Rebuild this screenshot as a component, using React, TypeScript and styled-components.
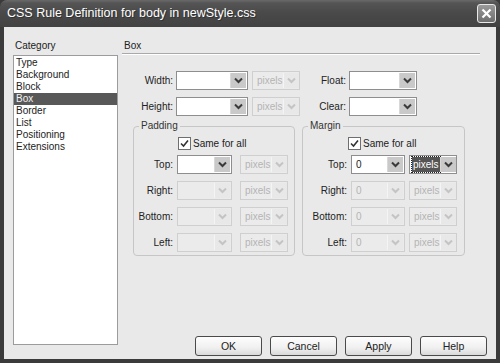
import React from 'react'
import styled, { createGlobalStyle } from 'styled-components'

const GlobalStyle = createGlobalStyle`
  html, body {
    margin: 0;
    padding: 0;
    background: #3a3a3a;
  }
  body {
    font-family: "Liberation Sans", Arial, sans-serif;
    font-size: 10px;
    color: #222;
  }
`

const Window = styled.div`
  width: 500px;
  height: 363px;
  display: flex;
  flex-direction: column;
  background: #3b3b3b;
  border-radius: 7px 7px 0 0;
  overflow: hidden;
`

const TitleBar = styled.div`
  height: 27px;
  flex: none;
  display: flex;
  align-items: center;
  justify-content: space-between;
  padding: 0 4px 1px 7px;
  box-sizing: border-box;
  background: linear-gradient(to bottom, #6a6a6a 0px, #555 3px, #4a4a4a 12px, #424242 27px);
`

const Title = styled.span`
  font-family: "Liberation Sans", Arial, sans-serif;
  font-size: 12.5px;
  color: #fff;
  text-shadow: 1px 1px 0 #333;
`

const CloseButton = styled.div`
  width: 19px;
  height: 19px;
  box-sizing: border-box;
  border: 1px solid #e8e8e8;
  border-radius: 3px;
  background: linear-gradient(to bottom, #9a9a9a, #6e6e6e);
  display: flex;
  align-items: center;
  justify-content: center;
`

const Body = styled.div`
  flex: 1;
  margin: 0 4px 4px;
  background: #e9e9e9;
  display: flex;
  padding: 12px 9px 2px;
  box-sizing: border-box;
  gap: 4px;
`

const CategoryCol = styled.div`
  width: 105px;
  display: flex;
  flex-direction: column;
`

const SectionLabel = styled.div`
  height: 13px;
  line-height: 13px;
  margin-bottom: 3px;
  padding-left: 2px;
`

const ListBox = styled.div`
  height: 290px;
  box-sizing: border-box;
  border: 1px solid #9c9c9c;
  background: #fff;
  padding-top: 1px;
`

const ListItem = styled.div<{ $selected?: boolean }>`
  height: 12px;
  line-height: 12px;
  padding-left: 2px;
  background: ${({ $selected }) => ($selected ? '#585858' : 'transparent')};
  color: ${({ $selected }) => ($selected ? '#f2f2f2' : '#222')};
`

const RightCol = styled.div`
  flex: 1;
  display: flex;
  flex-direction: column;
`

const Rule = styled.div`
  height: 1px;
  margin-top: -2px;
  margin-right: 7px;
  background: #a9a9a9;
  border-bottom: 1px solid #fff;
`

const TopRows = styled.div`
  margin-top: 16px;
  display: flex;
  flex-direction: column;
  gap: 7px;
`

const Row = styled.div`
  display: flex;
  align-items: center;
  height: 19px;
`

const FieldLabel = styled.div<{ $w: number }>`
  width: ${({ $w }) => $w}px;
  flex: none;
  text-align: right;
  color: #222;
`

const SelectBox = styled.div<{ $w: number; $disabled?: boolean; $ml: number }>`
  width: ${({ $w }) => $w}px;
  height: 19px;
  margin-left: ${({ $ml }) => $ml}px;
  flex: none;
  box-sizing: border-box;
  border: 1px solid ${({ $disabled }) => ($disabled ? '#cfcfcf' : '#8e8e8e')};
  background: ${({ $disabled }) => ($disabled ? '#ebebeb' : '#fff')};
  display: flex;
  align-items: center;
  padding: 1px;
`

const SelectText = styled.div<{ $disabled?: boolean }>`
  flex: 1;
  padding-left: 3px;
  color: ${({ $disabled }) => ($disabled ? '#b4b4b4' : '#222')};
  line-height: 15px;
  height: 15px;
  display: flex;
  align-items: center;
`

const Highlight = styled.span`
  background: #555;
  color: #fff;
  outline: 1px dotted #222;
  padding: 0 1px;
  line-height: 15px;
  margin-left: -2px;
`

const ArrowBtn = styled.div<{ $disabled?: boolean }>`
  width: 15px;
  height: 15px;
  flex: none;
  background: ${({ $disabled }) => ($disabled ? '#e8e8e8' : '#c9c9c9')};
  border-left: 1px solid ${({ $disabled }) => ($disabled ? '#f4f4f4' : '#d8d8d8')};
  display: flex;
  align-items: center;
  justify-content: center;
`

const Groups = styled.div`
  display: flex;
  gap: 7px;
  margin-top: 4px;
  margin-left: 11px;
`

const Group = styled.fieldset<{ $w: number }>`
  width: ${({ $w }) => $w}px;
  box-sizing: border-box;
  margin: 0;
  padding: 0 0 3px;
  border: 1px solid #c6c6c6;
  border-radius: 4px;
  display: flex;
  flex-direction: column;
`

const Legend = styled.legend`
  margin-left: 5px;
  padding: 0 2px;
  line-height: 12px;
  color: #333;
`

const SameRow = styled.label<{ $ml: number }>`
  display: flex;
  align-items: center;
  gap: 2px;
  margin: 5px 0 5px ${({ $ml }) => $ml}px;
  height: 13px;
`

const CheckBox = styled.div`
  width: 13px;
  height: 13px;
  box-sizing: border-box;
  border: 1px solid #6f6f6f;
  background: #fff;
  display: flex;
  align-items: center;
  justify-content: center;
`

const GroupRows = styled.div`
  display: flex;
  flex-direction: column;
  gap: 7px;
`

const ButtonRow = styled.div`
  margin-top: auto;
  display: flex;
  justify-content: flex-end;
  gap: 8px;
  padding-bottom: 1px;
`

const Button = styled.div`
  width: 67px;
  height: 20px;
  box-sizing: border-box;
  border: 1px solid #4a4a4a;
  border-radius: 3px;
  background: linear-gradient(to bottom, #fdfdfd, #f0f0f0 60%, #d9d9d9);
  display: flex;
  align-items: center;
  justify-content: center;
  font-size: 10.5px;
  color: #222;
`

const Chevron = ({ disabled }: { disabled?: boolean }) => (
  <svg width="9" height="7" viewBox="0 0 9 7">
    <path
      d="M1 1.5 L4.5 5 L8 1.5"
      fill="none"
      stroke={disabled ? '#c4c4c4' : '#3a3a3a'}
      strokeWidth="2"
    />
  </svg>
)

type SelectProps = {
  w: number
  ml: number
  value?: string
  disabled?: boolean
  focus?: boolean
}

const Select = ({ w, ml, value, disabled, focus }: SelectProps) => (
  <SelectBox $w={w} $ml={ml} $disabled={disabled}>
    <SelectText $disabled={disabled}>
      {focus ? <Highlight>{value}</Highlight> : value}
    </SelectText>
    <ArrowBtn $disabled={disabled}>
      <Chevron disabled={disabled} />
    </ArrowBtn>
  </SelectBox>
)

const categories = ['Type', 'Background', 'Block', 'Box', 'Border', 'List', 'Positioning', 'Extensions']
const sides = ['Top', 'Right', 'Bottom', 'Left']

type GroupProps = {
  title: string
  width: number
  labelW: number
  selW: number
  unitGap: number
  checkLeft: number
  value?: string
}

const SideGroup = ({ title, width, labelW, selW, unitGap, checkLeft, value }: GroupProps) => (
  <Group $w={width}>
    <Legend>{title}</Legend>
    <SameRow $ml={checkLeft}>
      <CheckBox>
        <svg width="9" height="9" viewBox="0 0 9 9">
          <path d="M1 4.5 L3.5 7 L8 1.5" fill="none" stroke="#333" strokeWidth="1.6" />
        </svg>
      </CheckBox>
      <span>Same for all</span>
    </SameRow>
    <GroupRows>
      {sides.map((s, i) => (
        <Row key={s}>
          <FieldLabel $w={labelW}>{s}:</FieldLabel>
          <Select w={selW} ml={4} value={value} disabled={i > 0} />
          <Select w={48} ml={unitGap} value="pixels" disabled={i > 0 || !value} focus={i === 0 && !!value} />
        </Row>
      ))}
    </GroupRows>
  </Group>
)

export default function App() {
  return (
    <Window>
      <GlobalStyle />
      <TitleBar>
        <Title>CSS Rule Definition for body in newStyle.css</Title>
        <CloseButton>
          <svg width="11" height="11" viewBox="0 0 11 11">
            <path d="M1.5 1.5 L9.5 9.5 M9.5 1.5 L1.5 9.5" stroke="#fff" strokeWidth="2.2" />
          </svg>
        </CloseButton>
      </TitleBar>
      <Body>
        <CategoryCol>
          <SectionLabel>Category</SectionLabel>
          <ListBox>
            {categories.map((c) => (
              <ListItem key={c} $selected={c === 'Box'}>{c}</ListItem>
            ))}
          </ListBox>
        </CategoryCol>
        <RightCol>
          <SectionLabel>Box</SectionLabel>
          <Rule />
          <TopRows>
            <Row>
              <FieldLabel $w={51}>Width:</FieldLabel>
              <Select w={72} ml={3} />
              <Select w={48} ml={4} value="pixels" disabled />
              <FieldLabel $w={46}>Float:</FieldLabel>
              <Select w={68} ml={3} />
            </Row>
            <Row>
              <FieldLabel $w={51}>Height:</FieldLabel>
              <Select w={72} ml={3} />
              <Select w={48} ml={4} value="pixels" disabled />
              <FieldLabel $w={46}>Clear:</FieldLabel>
              <Select w={68} ml={3} />
            </Row>
          </TopRows>
          <Groups>
            <SideGroup title="Padding" width={162} labelW={39} selW={55} unitGap={8} checkLeft={44} />
            <SideGroup title="Margin" width={163} labelW={44} selW={54} unitGap={4} checkLeft={45} value="0" />
          </Groups>
          <ButtonRow>
            <Button>OK</Button>
            <Button>Cancel</Button>
            <Button>Apply</Button>
            <Button>Help</Button>
          </ButtonRow>
        </RightCol>
      </Body>
    </Window>
  )
}
